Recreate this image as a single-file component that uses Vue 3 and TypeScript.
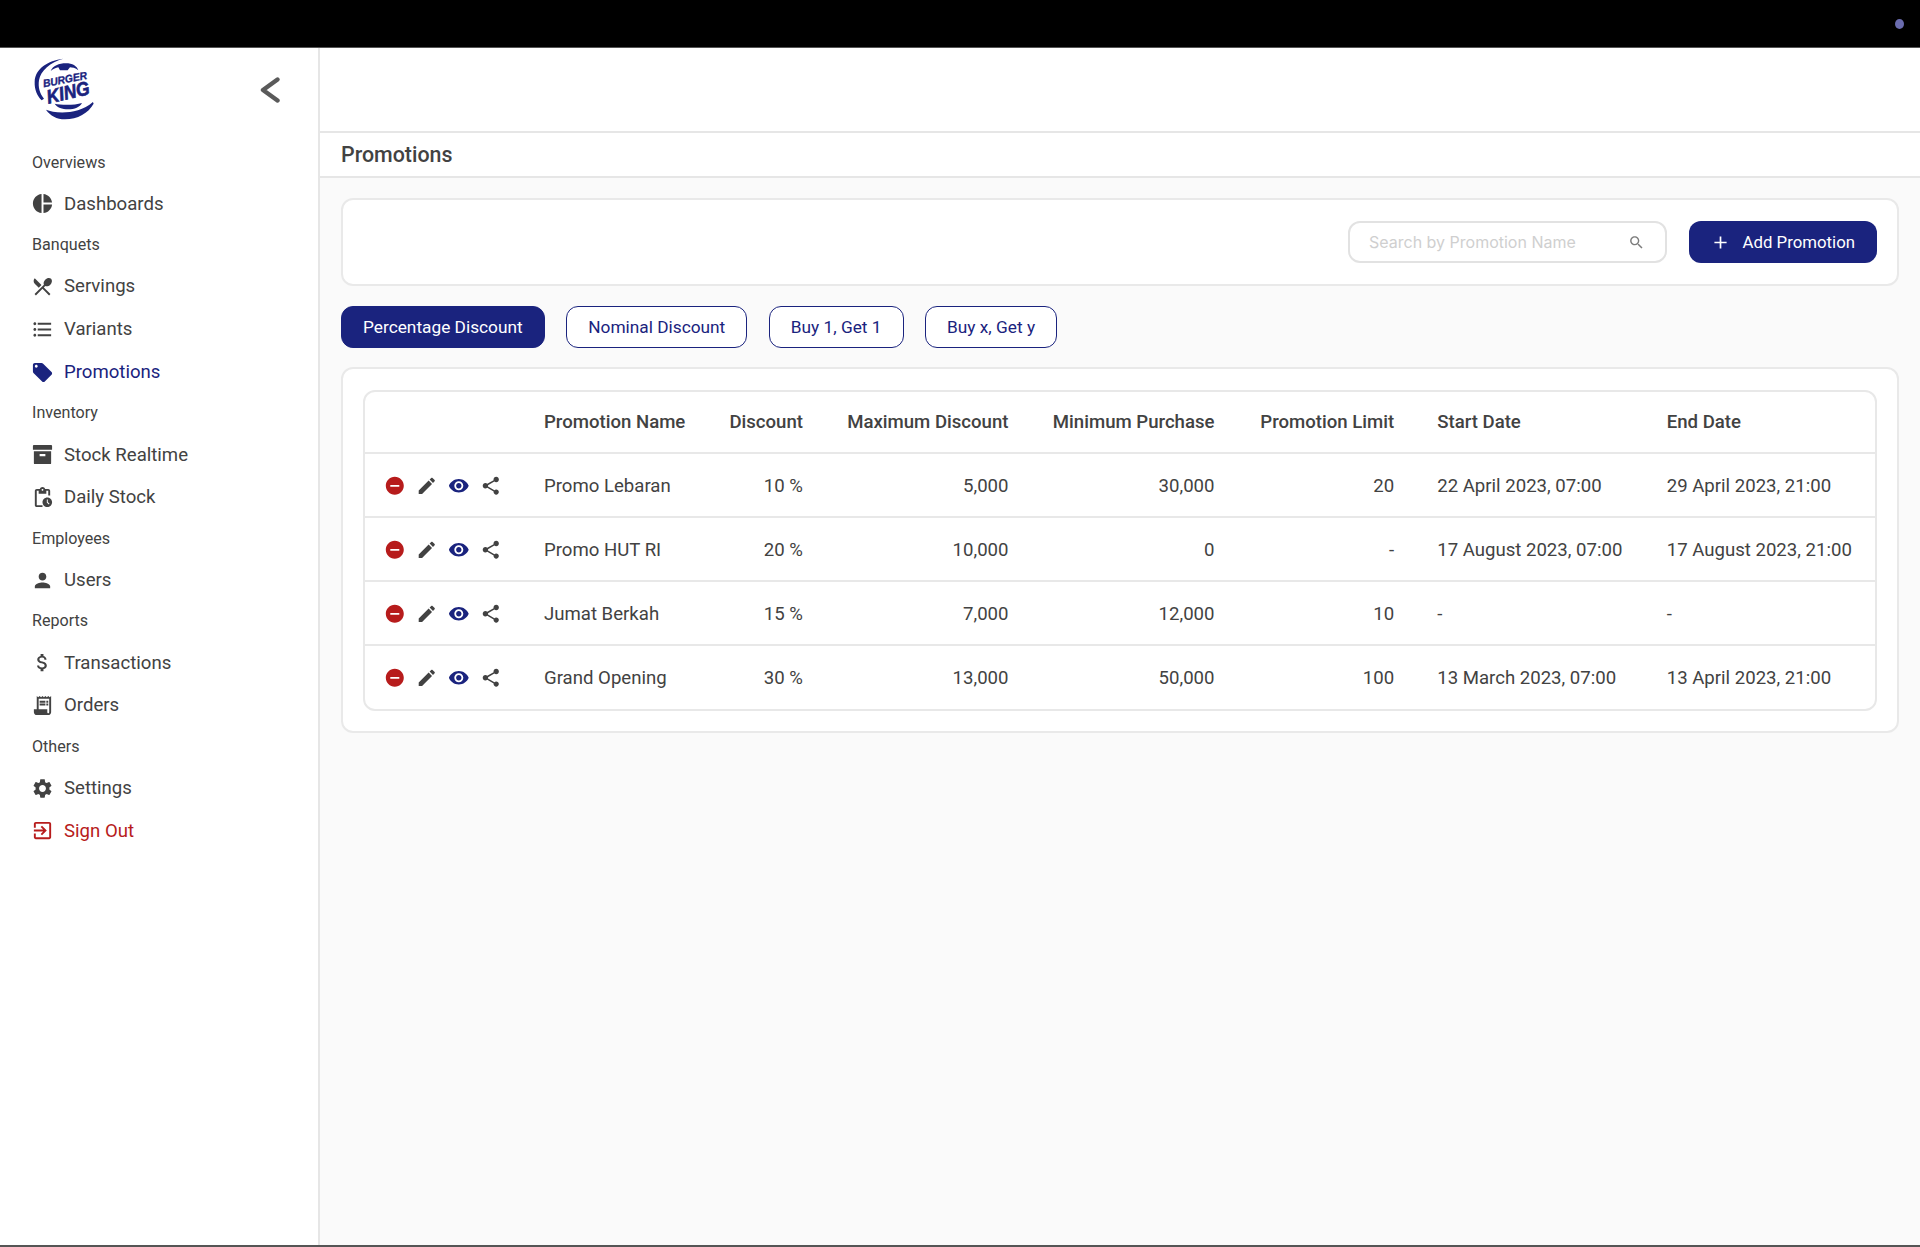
<script setup lang="ts">
interface NavItem { label: string; icon: string; tone?: string }
interface NavGroup { title: string; items: NavItem[] }

const P = {
  pie: 'M11 2v20c-5.07-.5-9-4.79-9-10s3.93-9.5 9-10zm2.03 0v8.99H22c-.47-4.74-4.24-8.52-8.97-8.99zm0 11.01V22c4.74-.47 8.5-4.25 8.97-8.99h-8.97z',
  serve: 'M8.1 13.34l2.83-2.83L3.91 3.5c-1.56 1.56-1.56 4.09 0 5.66l4.19 4.18zm6.78-1.81c1.53.71 3.68.21 5.27-1.38 1.91-1.91 2.28-4.65.81-6.12-1.46-1.46-4.2-1.1-6.12.81-1.59 1.59-2.09 3.74-1.38 5.27L3.7 19.87l1.41 1.41L12 14.41l6.88 6.88 1.41-1.41L13.41 13l1.47-1.47z',
  list: 'M4 10.5c-.83 0-1.5.67-1.5 1.5s.67 1.5 1.5 1.5 1.5-.67 1.5-1.5-.67-1.5-1.5-1.5zm0-6c-.83 0-1.5.67-1.5 1.5S3.17 7.5 4 7.5 5.5 6.83 5.5 6 4.83 4.5 4 4.5zm0 12c-.83 0-1.5.68-1.5 1.5s.68 1.5 1.5 1.5 1.5-.68 1.5-1.5-.67-1.5-1.5-1.5zM7 19h14v-2H7v2zm0-6h14v-2H7v2zm0-8v2h14V5H7z',
  tag: 'M21.41 11.58l-9-9C12.05 2.22 11.55 2 11 2H4c-1.1 0-2 .9-2 2v7c0 .55.22 1.05.59 1.42l9 9c.36.36.86.58 1.41.58.55 0 1.05-.22 1.41-.59l7-7c.37-.36.59-.86.59-1.41 0-.55-.23-1.06-.59-1.42zM5.5 7C4.67 7 4 6.33 4 5.5S4.67 4 5.5 4 7 4.67 7 5.5 6.33 7 5.5 7z',
  box: 'M3 2h18a1 1 0 0 1 1 1v4H2V3a1 1 0 0 1 1-1zM3 8.5h18V21a1 1 0 0 1-1 1H4a1 1 0 0 1-1-1zM9 11.5v2.2h6v-2.2z',
  daily: 'M17 12c-2.76 0-5 2.24-5 5s2.24 5 5 5 5-2.24 5-5-2.24-5-5-5zm1.65 7.35L16.5 17.2V14h1v2.79l1.85 1.85-.7.71zM18 3h-3.18C14.4 1.84 13.3 1 12 1s-2.4.84-2.82 2H6c-1.1 0-2 .9-2 2v15c0 1.1.9 2 2 2h6v-2H6V5h2v3h8V5h2v5h2V5c0-1.1-.9-2-2-2zm-6 2c-.55 0-1-.45-1-1s.45-1 1-1 1 .45 1 1-.45 1-1 1z',
  user: 'M12 12c2.21 0 4-1.79 4-4s-1.79-4-4-4-4 1.79-4 4 1.79 4 4 4zm0 2c-2.67 0-8 1.34-8 4v2h16v-2c0-2.66-5.33-4-8-4z',
  money: 'M11.8 10.9c-2.27-.59-3-1.2-3-2.15 0-1.09 1.01-1.85 2.7-1.85 1.78 0 2.44.85 2.5 2.1h2.21c-.07-1.72-1.12-3.3-3.21-3.81V3h-3v2.16c-1.94.42-3.5 1.68-3.5 3.61 0 2.31 1.91 3.46 4.7 4.13 2.5.6 3 1.48 3 2.41 0 .69-.49 1.79-2.7 1.79-2.06 0-2.87-.92-2.98-2.1h-2.2c.12 2.19 1.76 3.42 3.68 3.83V21h3v-2.15c1.95-.37 3.5-1.5 3.5-3.55 0-2.84-2.43-3.81-4.7-4.4z',
  receipt: 'M19.5 3.5 18 2l-1.5 1.5L15 2l-1.5 1.5L12 2l-1.5 1.5L9 2 7.5 3.5 6 2v14H3v3c0 1.66 1.34 3 3 3h12c1.66 0 3-1.34 3-3V2l-1.5 1.5zM19 19c0 .55-.45 1-1 1s-1-.45-1-1v-3H8V5h11v14zM9 7h6v2H9zm7 0h2v2h-2zM9 10h6v2H9zm7 0h2v2h-2z',
  gear: 'M19.14 12.94c.04-.3.06-.61.06-.94 0-.32-.02-.64-.07-.94l2.03-1.58c.18-.14.23-.41.12-.61l-1.92-3.32c-.12-.22-.37-.29-.59-.22l-2.39.96c-.5-.38-1.03-.7-1.62-.94l-.36-2.54c-.04-.24-.24-.41-.48-.41h-3.84c-.24 0-.43.17-.47.41l-.36 2.54c-.59.24-1.13.57-1.62.94l-2.39-.96c-.22-.08-.47 0-.59.22L2.74 8.87c-.12.21-.08.47.12.61l2.03 1.58c-.05.3-.09.63-.09.94s.02.64.07.94l-2.03 1.58c-.18.14-.23.41-.12.61l1.92 3.32c.12.22.37.29.59.22l2.39-.96c.5.38 1.03.7 1.62.94l.36 2.54c.05.24.24.41.48.41h3.84c.24 0 .44-.17.47-.41l.36-2.54c.59-.24 1.13-.56 1.62-.94l2.39.96c.22.08.47 0 .59-.22l1.92-3.32c.12-.22.07-.47-.12-.61l-2.01-1.58zM12 15.6c-1.98 0-3.6-1.62-3.6-3.6s1.62-3.6 3.6-3.6 3.6 1.62 3.6 3.6-1.62 3.6-3.6 3.6z',
  exit: 'M10.09 15.59L11.5 17l5-5-5-5-1.41 1.41L12.67 11H3v2h9.67l-2.58 2.59zM19 3H5c-1.11 0-2 .9-2 2v4h2V5h14v14H5v-4H3v4c0 1.1.89 2 2 2h14c1.1 0 2-.9 2-2V5c0-1.1-.9-2-2-2z',
  remove: 'M12 2C6.48 2 2 6.48 2 12s4.48 10 10 10 10-4.48 10-10S17.52 2 12 2zm5 11H7v-2h10v2z',
  edit: 'M3 17.25V21h3.75L17.81 9.94l-3.75-3.75L3 17.25zM20.71 7.04c.39-.39.39-1.02 0-1.41l-2.34-2.34c-.39-.39-1.02-.39-1.41 0l-1.83 1.83 3.75 3.75 1.83-1.83z',
  eye: 'M12 4.5C7 4.5 2.73 7.61 1 12c1.73 4.39 6 7.5 11 7.5s9.27-3.11 11-7.5c-1.73-4.39-6-7.5-11-7.5zM12 17c-2.76 0-5-2.24-5-5s2.24-5 5-5 5 2.24 5 5-2.24 5-5 5zm0-8c-1.66 0-3 1.34-3 3s1.34 3 3 3 3-1.34 3-3-1.34-3-3-3z',
  share: 'M18 16.08c-.76 0-1.44.3-1.96.77L8.91 12.7c.05-.23.09-.46.09-.7s-.04-.47-.09-.7l7.05-4.11c.54.5 1.25.81 2.04.81 1.66 0 3-1.34 3-3s-1.34-3-3-3-3 1.34-3 3c0 .24.04.47.09.7L8.04 9.81C7.5 9.31 6.79 9 6 9c-1.66 0-3 1.34-3 3s1.34 3 3 3c.79 0 1.5-.31 2.04-.81l7.12 4.16c-.05.21-.08.43-.08.65 0 1.61 1.31 2.92 2.92 2.92 1.61 0 2.92-1.31 2.92-2.92s-1.31-2.92-2.92-2.92z',
  search: 'M15.5 14h-.79l-.28-.27C15.41 12.59 16 11.11 16 9.5 16 5.91 13.09 3 9.5 3S3 5.91 3 9.5 5.91 16 9.5 16c1.61 0 3.09-.59 4.23-1.57l.27.28v.79l5 4.99L20.49 19l-4.99-5zm-6 0C7.01 14 5 11.99 5 9.5S7.01 5 9.5 5 14 7.01 14 9.5 11.99 14 9.5 14z',
}

const groups: NavGroup[] = [
  { title: 'Overviews', items: [{ label: 'Dashboards', icon: P.pie }] },
  { title: 'Banquets', items: [
    { label: 'Servings', icon: P.serve },
    { label: 'Variants', icon: P.list },
    { label: 'Promotions', icon: P.tag, tone: 'active' },
  ] },
  { title: 'Inventory', items: [
    { label: 'Stock Realtime', icon: P.box },
    { label: 'Daily Stock', icon: P.daily },
  ] },
  { title: 'Employees', items: [{ label: 'Users', icon: P.user }] },
  { title: 'Reports', items: [
    { label: 'Transactions', icon: P.money },
    { label: 'Orders', icon: P.receipt },
  ] },
  { title: 'Others', items: [
    { label: 'Settings', icon: P.gear },
    { label: 'Sign Out', icon: P.exit, tone: 'danger' },
  ] },
]

const tabs = ['Percentage Discount', 'Nominal Discount', 'Buy 1, Get 1', 'Buy x, Get y']

const columns = [
  { label: '', width: 157.5, cls: '' },
  { label: 'Promotion Name', width: 185, cls: '' },
  { label: 'Discount', width: 117, cls: 'num' },
  { label: 'Maximum Discount', width: 205.5, cls: 'num' },
  { label: 'Minimum Purchase', width: 206, cls: 'num' },
  { label: 'Promotion Limit', width: 179.7, cls: 'num' },
  { label: 'Start Date', width: 229.5, cls: '' },
  { label: 'End Date', width: 229.8, cls: '' },
]

const rows = [
  ['Promo Lebaran', '10 %', '5,000', '30,000', '20', '22 April 2023, 07:00', '29 April 2023, 21:00'],
  ['Promo HUT RI', '20 %', '10,000', '0', '-', '17 August 2023, 07:00', '17 August 2023, 21:00'],
  ['Jumat Berkah', '15 %', '7,000', '12,000', '10', '-', '-'],
  ['Grand Opening', '30 %', '13,000', '50,000', '100', '13 March 2023, 07:00', '13 April 2023, 21:00'],
]

const actions = [
  { d: P.remove, cls: 'red' },
  { d: P.edit, cls: '' },
  { d: P.eye, cls: 'navy' },
  { d: P.share, cls: '' },
]
</script>

<template>
  <div class="page">
    <div class="topbar"><span class="dot"></span></div>
    <div class="shell">
      <aside class="sidebar">
        <div class="brand">
          <svg class="logo" viewBox="40 30 190 200" aria-label="Burger King">
            <path class="fill" d="M131 41C84 47 47 70 45 110c-1 24 8 43 21 56l7-5C60 146 55 126 58 106 63 76 92 52 131 41z" />
            <path class="fill" d="M93 78c6-15 25-23 46-23 19 0 33 8 37 21-8-7-20-9-25-9l-7 9H121l-5-9c-7 1-15 5-23 11z" />
            <path class="fill" d="M105 176c20 5 60 5 82-2-6 12-22 19-42 19-17 0-33-6-40-17z" />
            <path class="fill" d="M79 194c28 12 96 16 141-23l2 5c-16 28-48 47-86 47-25 0-44-11-57-29z" />
            <text class="burger" x="72" y="127" textLength="134" lengthAdjust="spacingAndGlyphs" transform="rotate(-11 72 127)">BURGER</text>
            <text class="king" x="86" y="176" textLength="130" lengthAdjust="spacingAndGlyphs" transform="rotate(-13 86 176)">KING</text>
          </svg>
          <svg class="collapse" viewBox="0 0 20 26"><path d="M17.5 2.5 3 13l14.5 10.5" /></svg>
        </div>
        <nav class="nav">
          <template v-for="g in groups" :key="g.title">
            <div class="group-title">{{ g.title }}</div>
            <div v-for="it in g.items" :key="it.label" class="nav-item" :class="it.tone">
              <svg class="nav-icon" viewBox="0 0 24 24"><path :d="it.icon" fill-rule="evenodd" /></svg>
              <span>{{ it.label }}</span>
            </div>
          </template>
        </nav>
      </aside>

      <main class="main">
        <header class="header"></header>
        <div class="titlebar"><h1>Promotions</h1></div>
        <section class="content">
          <div class="card toolbar">
            <div class="search">
              <span class="placeholder">Search by Promotion Name</span>
              <svg class="search-icon" viewBox="0 0 24 24"><path :d="P.search" /></svg>
            </div>
            <button class="add-btn" type="button">
              <svg class="plus" viewBox="0 0 16 16"><path d="M8 1.5v13M1.5 8h13" /></svg>
              <span>Add Promotion</span>
            </button>
          </div>

          <div class="tabs">
            <button v-for="(t, i) in tabs" :key="t" type="button" class="tab" :class="{ on: i === 0 }">{{ t }}</button>
          </div>

          <div class="card table-card">
            <div class="table-wrap">
              <table>
                <colgroup>
                  <col v-for="c in columns" :key="c.label" :style="{ width: c.width + 'px' }" />
                </colgroup>
                <thead>
                  <tr>
                    <th v-for="c in columns" :key="c.label" :class="c.cls">{{ c.label }}</th>
                  </tr>
                </thead>
                <tbody>
                  <tr v-for="r in rows" :key="r[0]">
                    <td class="acts">
                      <div class="act-row">
                        <svg v-for="a in actions" :key="a.d" class="act" :class="a.cls" viewBox="0 0 24 24"><path :d="a.d" /></svg>
                      </div>
                    </td>
                    <td>{{ r[0] }}</td>
                    <td class="num">{{ r[1] }}</td>
                    <td class="num">{{ r[2] }}</td>
                    <td class="num">{{ r[3] }}</td>
                    <td class="num">{{ r[4] }}</td>
                    <td>{{ r[5] }}</td>
                    <td>{{ r[6] }}</td>
                  </tr>
                </tbody>
              </table>
            </div>
          </div>
        </section>
      </main>
    </div>
  </div>
</template>

<style>
html, body { margin: 0; background: #fff; }
</style>

<style scoped>
.page {
  width: 1920px;
  height: 1247px;
  box-sizing: border-box;
  border-bottom: 2px solid #555;
  display: flex;
  flex-direction: column;
  overflow: hidden;
  font-family: Roboto, "Liberation Sans", sans-serif;
  color: #424242;
}
.topbar {
  height: 47px;
  flex: none;
  background: #000;
  border-bottom: 1px solid #555;
  box-sizing: content-box;
  display: flex;
  justify-content: flex-end;
  align-items: flex-start;
  padding-right: 16px;
}
.dot {
  width: 9px;
  height: 10px;
  margin-top: 19px;
  border-radius: 50%;
  background: #6a6cae;
}
.shell { flex: 1; display: flex; min-height: 0; }
.sidebar {
  width: 320px;
  flex: none;
  box-sizing: border-box;
  background: #fff;
  border-right: 2px solid #e6e6e6;
  padding-left: 32px;
}
.brand {
  height: 94.7px;
  display: flex;
  justify-content: space-between;
  align-items: flex-start;
  padding: 6.5px 38px 0 1px;
  box-sizing: border-box;
}
.logo { width: 63.3px; height: 66.7px; overflow: visible; }
.logo .fill { fill: #1a237e; }
.logo text {
  fill: #1a237e;
  stroke: #1a237e;
  font-family: "Liberation Sans", Arial, sans-serif;
  font-weight: 700;
  font-style: italic;
}
.logo .burger { font-size: 32px; stroke-width: 1; }
.logo .king { font-size: 58px; stroke-width: 2; }
.collapse { width: 20px; height: 26px; margin-top: 22px; }
.collapse path { fill: none; stroke: #5a5a5a; stroke-width: 4.4; stroke-linecap: round; stroke-linejoin: round; }
.group-title {
  height: 39.8px;
  line-height: 39.8px;
  font-size: 16.1px;
  color: #424242;
}
.nav-item {
  height: 42.8px;
  display: flex;
  align-items: center;
  gap: 10px;
  font-size: 18.6px;
  color: #424242;
}
.nav-icon { width: 23px; height: 23px; flex: none; margin-left: -1px; fill: currentColor; }
.nav-item.active { color: #1a237e; }
.nav-item.danger { color: #b71c1c; }
.main { flex: 1; min-width: 0; display: flex; flex-direction: column; background: #fafafa; }
.header { height: 83px; flex: none; background: #fff; border-bottom: 2px solid #e6e6e6; }
.titlebar {
  height: 43px;
  flex: none;
  background: #fff;
  border-bottom: 2px solid #e6e6e6;
  display: flex;
  align-items: center;
  padding-left: 21px;
}
.titlebar h1 { margin: 0; font-size: 21.4px; font-weight: 500; color: #424242; }
.content {
  flex: 1;
  padding: 20px 21px 0;
  display: flex;
  flex-direction: column;
}
.card {
  background: #fff;
  border: 2px solid #e9e9e9;
  border-radius: 12px;
  box-sizing: border-box;
}
.toolbar {
  height: 88px;
  display: flex;
  justify-content: flex-end;
  align-items: center;
  gap: 22px;
  padding: 0 20px;
}
.search {
  width: 319px;
  height: 42px;
  box-sizing: border-box;
  border: 2px solid #e2e2e2;
  border-radius: 12px;
  background: #fff;
  display: flex;
  align-items: center;
  justify-content: space-between;
  padding: 0 20px 0 19px;
}
.placeholder { font-family: Inter, Roboto, sans-serif; font-size: 16px; color: #cfcfcf; }
.search-icon { width: 17px; height: 17px; fill: #7c7c7c; }
.add-btn {
  width: 188px;
  height: 42px;
  border: none;
  border-radius: 12px;
  background: #1a237e;
  color: #fff;
  font-family: Roboto, sans-serif;
  font-size: 16.8px;
  white-space: nowrap;
  display: flex;
  align-items: center;
  justify-content: flex-end;
  gap: 15px;
  padding: 0 22px;
}
.plus { width: 15px; height: 15px; flex: none; }
.plus path { stroke: #fff; stroke-width: 1.8; fill: none; }
.tabs { display: flex; gap: 21.5px; margin-top: 19.5px; }
.tab {
  height: 42px;
  box-sizing: border-box;
  padding: 0 21px;
  border: 1.5px solid #1a237e;
  border-radius: 12px;
  background: #fff;
  color: #1a237e;
  font-family: Roboto, sans-serif;
  font-size: 17.3px;
  white-space: nowrap;
}
.tab.on { background: #1a237e; color: #fff; }
.table-card { padding: 21.2px 20px 20px; margin-top: 19.3px; }
.table-wrap {
  border: 2px solid #e8e8e8;
  border-radius: 12px;
  overflow: hidden;
}
table { border-collapse: collapse; table-layout: fixed; width: 100%; font-size: 18.6px; color: #424242; }
th {
  height: 61px;
  padding: 0 21.5px;
  text-align: left;
  font-weight: 500;
  white-space: nowrap;
  box-sizing: border-box;
  border-bottom: 2px solid #e8e8e8;
}
td {
  height: 64px;
  padding: 1.5px 21.5px 0;
  box-sizing: border-box;
  white-space: nowrap;
  border-bottom: 2px solid #e8e8e8;
}
tbody tr:last-child td { border-bottom: none; }
.num { text-align: right; }
td.acts { padding: 1.5px 0 0 18.7px; }
.act-row { display: flex; gap: 10.4px; }
.act { width: 21.6px; height: 21.6px; fill: #424242; flex: none; }
.act.red { fill: #b71c1c; }
.act.navy { fill: #1a237e; }
</style>
